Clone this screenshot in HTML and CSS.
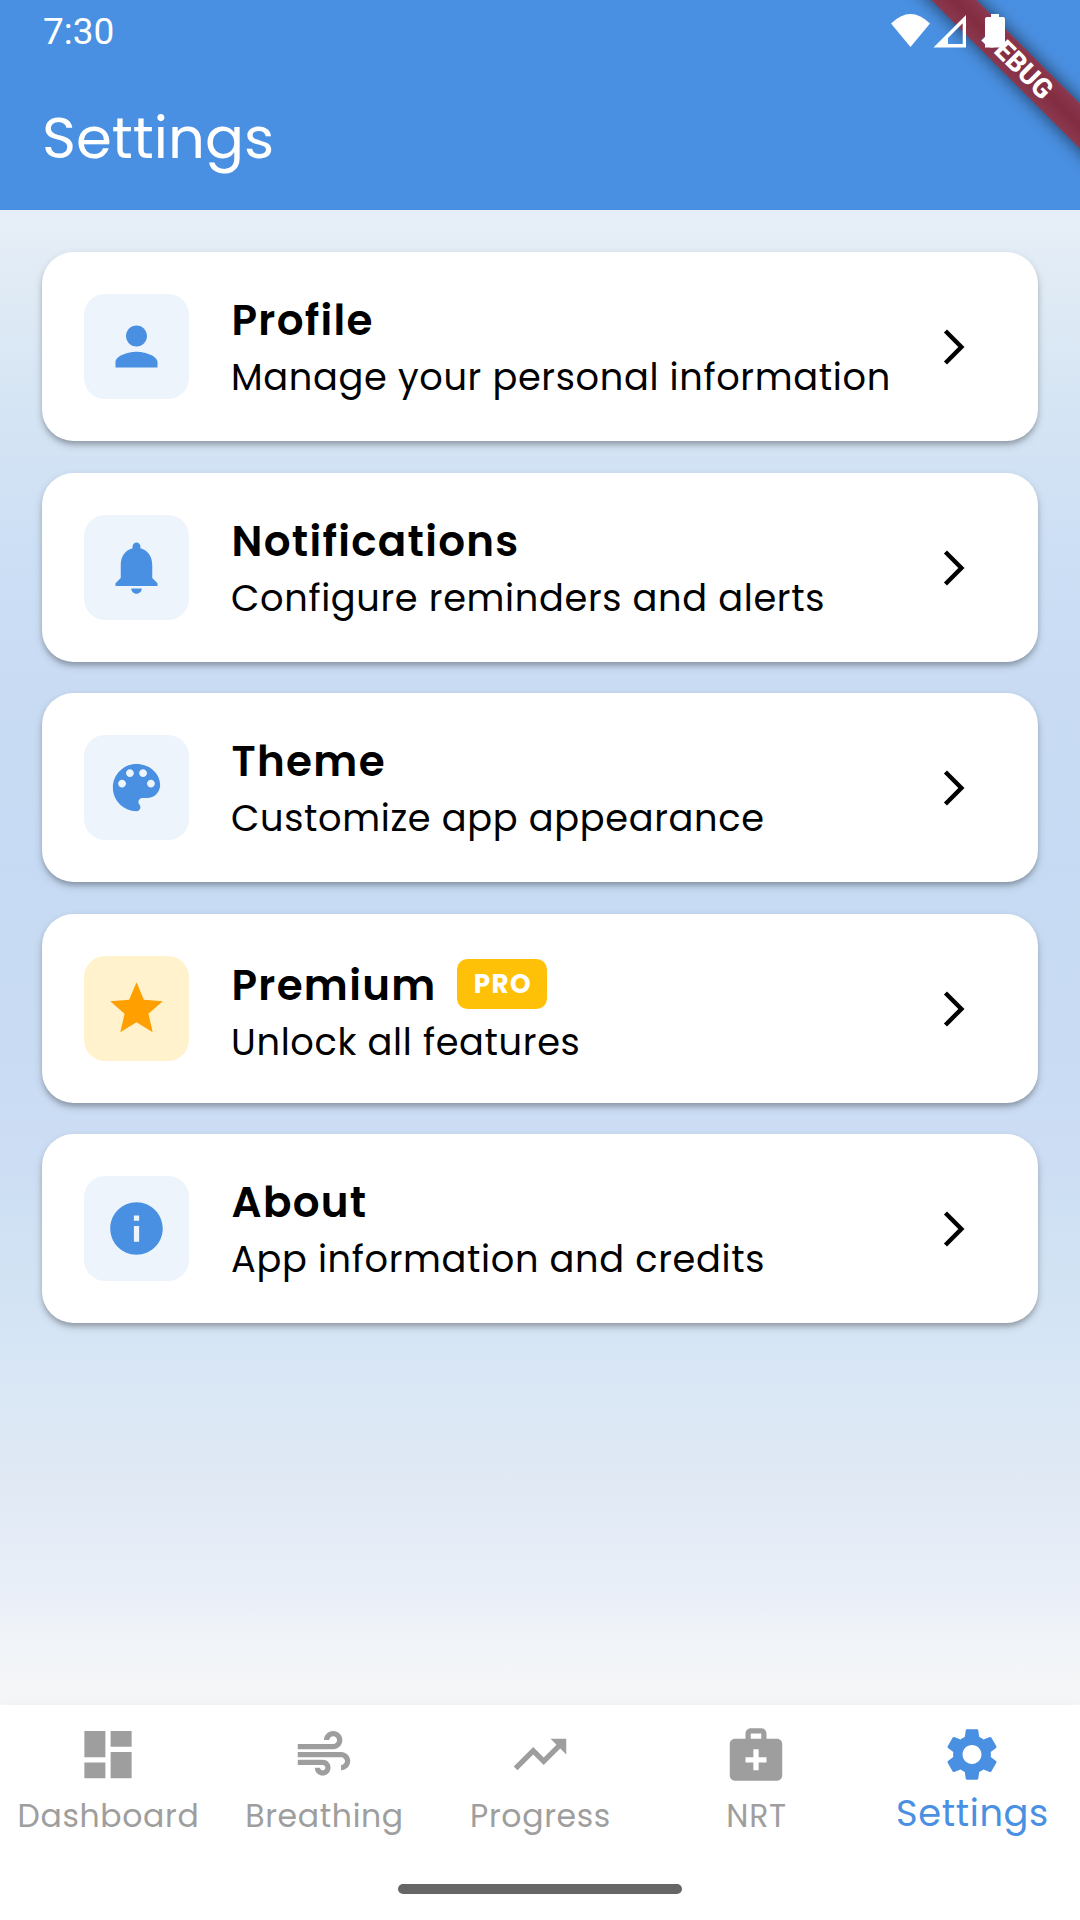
FILE: index.html
```html
<!DOCTYPE html>
<html lang="en">
<head>
<meta charset="utf-8">
<title>Settings</title>
<link rel="stylesheet" href="styles.css">
</head>
<body>
<div class="screen">
  <header class="appbar">
    <div class="banner"><span>DEBUG</span></div>
    <div class="status">
      <span class="clock">7:30</span>
      <svg class="status-icons" viewBox="0 0 120 36" width="120" height="36">
        <path d="M1 9.500Q20.500 -9.500 40 9.500L20.500 33Z"/>
        <path fill-rule="evenodd" d="M43.500 33.500L76 1V33.500ZM58 30H72.700V9.300L58 24Z"/>
        <path d="M101 0h8v3h4q2 0 2 2v28.500H95V5q0-2 2-2h4z"/>
      </svg>
    </div>
    <h1 class="title">Settings</h1>
  </header>

  <main class="list">
    <a class="card">
      <span class="tile"><svg class="icon" viewBox="0 0 24 24"><path d="M12 12c2.210 0 4-1.790 4-4s-1.790-4-4-4-4 1.790-4 4 1.790 4 4 4zm0 2c-2.670 0-8 1.340-8 4v2h16v-2c0-2.660-5.330-4-8-4z"/></svg></span>
      <span class="text"><span class="name">Profile</span><span class="desc">Manage your personal information</span></span>
      <svg class="chevron" viewBox="0 0 24 24"><path d="M6.230 20.230L8 22l10-10L8 2 6.230 3.770 14.460 12z"/></svg>
    </a>
    <a class="card">
      <span class="tile"><svg class="icon" viewBox="0 0 24 24"><path d="M12 22c1.100 0 2-.9 2-2h-4c0 1.100.89 2 2 2zm6-6v-5c0-3.070-1.640-5.640-4.500-6.320V4c0-.83-.67-1.500-1.500-1.500s-1.500.67-1.500 1.500v.68C7.630 5.360 6 7.920 6 11v5l-2 2v1h16v-1l-2-2z"/></svg></span>
      <span class="text"><span class="name">Notifications</span><span class="desc">Configure reminders and alerts</span></span>
      <svg class="chevron" viewBox="0 0 24 24"><path d="M6.230 20.230L8 22l10-10L8 2 6.230 3.770 14.460 12z"/></svg>
    </a>
    <a class="card">
      <span class="tile"><svg class="icon" viewBox="0 0 24 24"><path d="M12 3c-4.970 0-9 4.030-9 9s4.030 9 9 9c.83 0 1.500-.67 1.500-1.500 0-.39-.15-.74-.39-1.010-.23-.26-.38-.61-.38-.99 0-.83.67-1.500 1.500-1.500H16c2.760 0 5-2.240 5-5 0-4.420-4.030-8-9-8zm-5.500 9c-.83 0-1.500-.67-1.500-1.500S5.670 9 6.500 9 8 9.670 8 10.500 7.330 12 6.500 12zm3-4C8.670 8 8 7.330 8 6.500S8.670 5 9.500 5s1.500.67 1.500 1.500S10.330 8 9.500 8zm5 0c-.83 0-1.500-.67-1.500-1.500S13.670 5 14.500 5s1.500.67 1.500 1.500S15.330 8 14.500 8zm3 4c-.83 0-1.500-.67-1.500-1.500S16.670 9 17.500 9s1.500.67 1.500 1.500-.67 1.500-1.500 1.500z"/></svg></span>
      <span class="text"><span class="name">Theme</span><span class="desc">Customize app appearance</span></span>
      <svg class="chevron" viewBox="0 0 24 24"><path d="M6.230 20.230L8 22l10-10L8 2 6.230 3.770 14.460 12z"/></svg>
    </a>
    <a class="card">
      <span class="tile gold"><svg class="icon" viewBox="0 0 24 24"><path d="M12 17.270L18.180 21l-1.640-7.030L22 9.240l-7.190-.61L12 2 9.190 8.630 2 9.240l5.460 4.730L5.820 21z"/></svg></span>
      <span class="text with-badge"><span class="name">Premium<span class="badge">PRO</span></span><span class="desc">Unlock all features</span></span>
      <svg class="chevron" viewBox="0 0 24 24"><path d="M6.230 20.230L8 22l10-10L8 2 6.230 3.770 14.460 12z"/></svg>
    </a>
    <a class="card">
      <span class="tile"><svg class="icon" viewBox="0 0 24 24"><path d="M12 2C6.480 2 2 6.480 2 12s4.480 10 10 10 10-4.480 10-10S17.520 2 12 2zm1 15h-2v-6h2v6zm0-8h-2V7h2v2z"/></svg></span>
      <span class="text"><span class="name">About</span><span class="desc">App information and credits</span></span>
      <svg class="chevron" viewBox="0 0 24 24"><path d="M6.230 20.230L8 22l10-10L8 2 6.230 3.770 14.460 12z"/></svg>
    </a>
  </main>

  <footer class="bottom">
    <nav class="nav">
      <a class="item"><svg class="icon" viewBox="0 0 24 24"><path d="M3 13h8V3H3v10zm0 8h8v-6H3v6zm10 0h8V11h-8v10zm0-18v6h8V3h-8z"/></svg><span class="label">Dashboard</span></a>
      <a class="item"><svg class="icon" viewBox="0 0 24 24"><path d="M14.500 17c0 1.650-1.350 3-3 3s-3-1.350-3-3h2c0 .55.45 1 1 1s1-.45 1-1-.45-1-1-1H2v-2h9.500c1.650 0 3 1.350 3 3zM19 6.500C19 4.570 17.430 3 15.500 3S12 4.570 12 6.500h2c0-.83.67-1.500 1.500-1.500s1.500.67 1.500 1.500S16.330 8 15.500 8H2v2h13.500c1.930 0 3.500-1.570 3.500-3.500zm-.5 4.500H2v2h16.500c.83 0 1.500.67 1.500 1.500s-.67 1.500-1.500 1.500v2c1.930 0 3.500-1.570 3.500-3.500S20.430 11 18.500 11z"/></svg><span class="label">Breathing</span></a>
      <a class="item"><svg class="icon" viewBox="0 0 24 24"><path d="M16 6l2.290 2.290-4.880 4.880-4-4L2 16.590 3.410 18l6-6 4 4 6.300-6.290L22 12V6z"/></svg><span class="label">Progress</span></a>
      <a class="item"><svg class="icon" viewBox="0 0 24 24"><path d="M20 6h-4V4c0-1.100-.9-2-2-2h-4c-1.100 0-2 .9-2 2v2H4c-1.100 0-2 .9-2 2v12c0 1.100.9 2 2 2h16c1.100 0 2-.9 2-2V8c0-1.100-.9-2-2-2zM10 4h4v2h-4V4zm6 11h-3v3h-2v-3H8v-2h3v-3h2v3h3v2z"/></svg><span class="label">NRT</span></a>
      <a class="item active"><svg class="icon" viewBox="0 0 24 24"><path d="M19.140 12.940c.04-.3.06-.61.06-.94 0-.32-.02-.64-.07-.94l2.030-1.580c.18-.14.23-.41.12-.61l-1.920-3.320c-.12-.22-.37-.29-.59-.22l-2.390.96c-.5-.38-1.030-.7-1.620-.94l-.36-2.540c-.04-.24-.24-.41-.48-.41h-3.840c-.24 0-.43.17-.47.41l-.36 2.540c-.59.24-1.130.57-1.620.94l-2.390-.96c-.22-.08-.47 0-.59.22L2.740 8.870c-.12.21-.08.47.12.61l2.030 1.580c-.05.3-.09.63-.09.94s.02.64.07.94l-2.030 1.580c-.18.14-.23.41-.12.61l1.920 3.320c.12.22.37.29.59.22l2.390-.96c.5.38 1.030.7 1.620.94l.36 2.540c.05.24.24.41.48.41h3.840c.24 0 .44-.17.47-.41l.36-2.540c.59-.24 1.130-.56 1.620-.94l2.390.96c.22.08.47 0 .59-.22l1.920-3.320c.12-.22.07-.47-.12-.61l-2.010-1.580zM12 15.600c-1.980 0-3.600-1.620-3.600-3.600s1.620-3.600 3.600-3.600 3.600 1.620 3.600 3.600-1.620 3.600-3.600 3.600z"/></svg><span class="label">Settings</span></a>
    </nav>
    <div class="handle"></div>
  </footer>
</div>
</body>
</html>
```
FILE: styles.css
```css
* { box-sizing: border-box; }

body {
  margin: 0;
  font-family: Poppins, Inter, "Open Sans", sans-serif;
}

svg { display: block; flex: none; fill: currentColor; }

.screen {
  display: flex;
  flex-direction: column;
  width: 1080px;
  height: 1920px;
  overflow: hidden;
}

/* App bar */
.appbar {
  position: relative;
  height: 210px;
  flex: none;
  overflow: hidden;
  background: #4a90e2;
  color: #fff;
}

.status {
  position: relative;
  display: flex;
  justify-content: space-between;
  align-items: flex-start;
  padding: 10px 70px 0 43px;
  height: 84px;
}

.clock {
  font-family: Roboto, sans-serif;
  font-size: 37px;
  line-height: 44px;
}

.status-icons { margin-top: 4px; }

.title {
  margin: 0;
  padding-left: 42px;
  font-size: 57.750px;
  font-weight: 400;
  line-height: 107px;
}

.banner {
  position: absolute;
  left: 867px;
  top: 47px;
  width: 300px;
  height: 31.500px;
  padding-left: 2px;
  transform: rotate(45deg);
  background: linear-gradient(#8b384e, #832d42 45%, #832d42 55%, #8b384e);
  box-shadow: 0 0 16px 2px rgba(0, 0, 0, .5);
  font-family: Roboto, sans-serif;
  font-size: 27.300px;
  font-weight: 800;
  line-height: 32px;
  text-align: center;
}

/* Settings list */
.list {
  flex: 1;
  padding: 42px;
  background: linear-gradient(#e7eef7 0, #e0ebf5 70px, #d6e5f4 190px, #cddff5 340px, #c8dbf3 490px, #c6dbf3 660px, #c8dbf3 790px, #ccddf4 940px, #d0e2f3 1040px, #d8e6f5 1160px, #e0e9f4 1270px, #eaeff9 1390px, #eff3f8 1420px, #f6f7f8 1490px);
}

.card {
  display: flex;
  align-items: center;
  height: 189px;
  padding: 0 63px 0 42px;
  border-radius: 31.500px;
  background: #fff;
  color: #000;
  box-shadow: 0 4px 5px -1px rgba(0, 0, 0, .2), 0 4px 9px rgba(0, 0, 0, .17);
}

.card:nth-child(even) { margin: 32px 0 31px; }

.tile {
  display: grid;
  place-items: center;
  flex: none;
  width: 105px;
  height: 105px;
  border-radius: 21px;
  background: #edf4fc;
  color: #4a90e2;
}

.tile.gold { background: #fff2cd; color: #ffa000; }

.icon { width: 63px; height: 63px; }

.text {
  flex: 1;
  display: flex;
  flex-direction: column;
  margin-left: 42px;
  padding-top: 4px;
  white-space: nowrap;
}

.text.with-badge { padding-top: 10px; }

.name {
  display: flex;
  align-items: center;
  padding-left: .5px;
  font-size: 42px;
  font-weight: 600;
  line-height: 58px;
  letter-spacing: 1.312px;
}

.desc {
  margin-top: -1px;
  font-size: 36.750px;
  line-height: 56px;
  letter-spacing: .656px;
}

.badge {
  height: 50px;
  margin: 0 0 4px 20.500px;
  padding: 0 14.750px 0 16.750px;
  border-radius: 10.500px;
  background: #ffc107;
  color: #fff;
  font-size: 26.250px;
  font-weight: 700;
  line-height: 50px;
}

.chevron { width: 42px; height: 42px; }

/* Bottom navigation */
.bottom {
  position: relative;
  height: 215px;
  flex: none;
  background: #fff;
  box-shadow: 0 0 20px rgba(0, 0, 0, .04);
}

.nav { display: grid; grid-template-columns: repeat(5, 1fr); height: 179px; }

.item {
  display: flex;
  flex-direction: column;
  align-items: center;
  padding-top: 18px;
  color: #9e9e9e;
}

.item .icon { margin-right: 1px; transform: translateX(.5px); }

.item.active { color: #4a90e2; }

.label {
  margin-left: 1px;
  font-size: 31.500px;
  line-height: 60px;
  letter-spacing: .656px;
  white-space: nowrap;
}

.active .label { font-size: 36.750px; line-height: 54px; }

.handle {
  width: 284px;
  height: 10px;
  margin: 0 auto;
  border-radius: 5px;
  background: #666;
}
```
